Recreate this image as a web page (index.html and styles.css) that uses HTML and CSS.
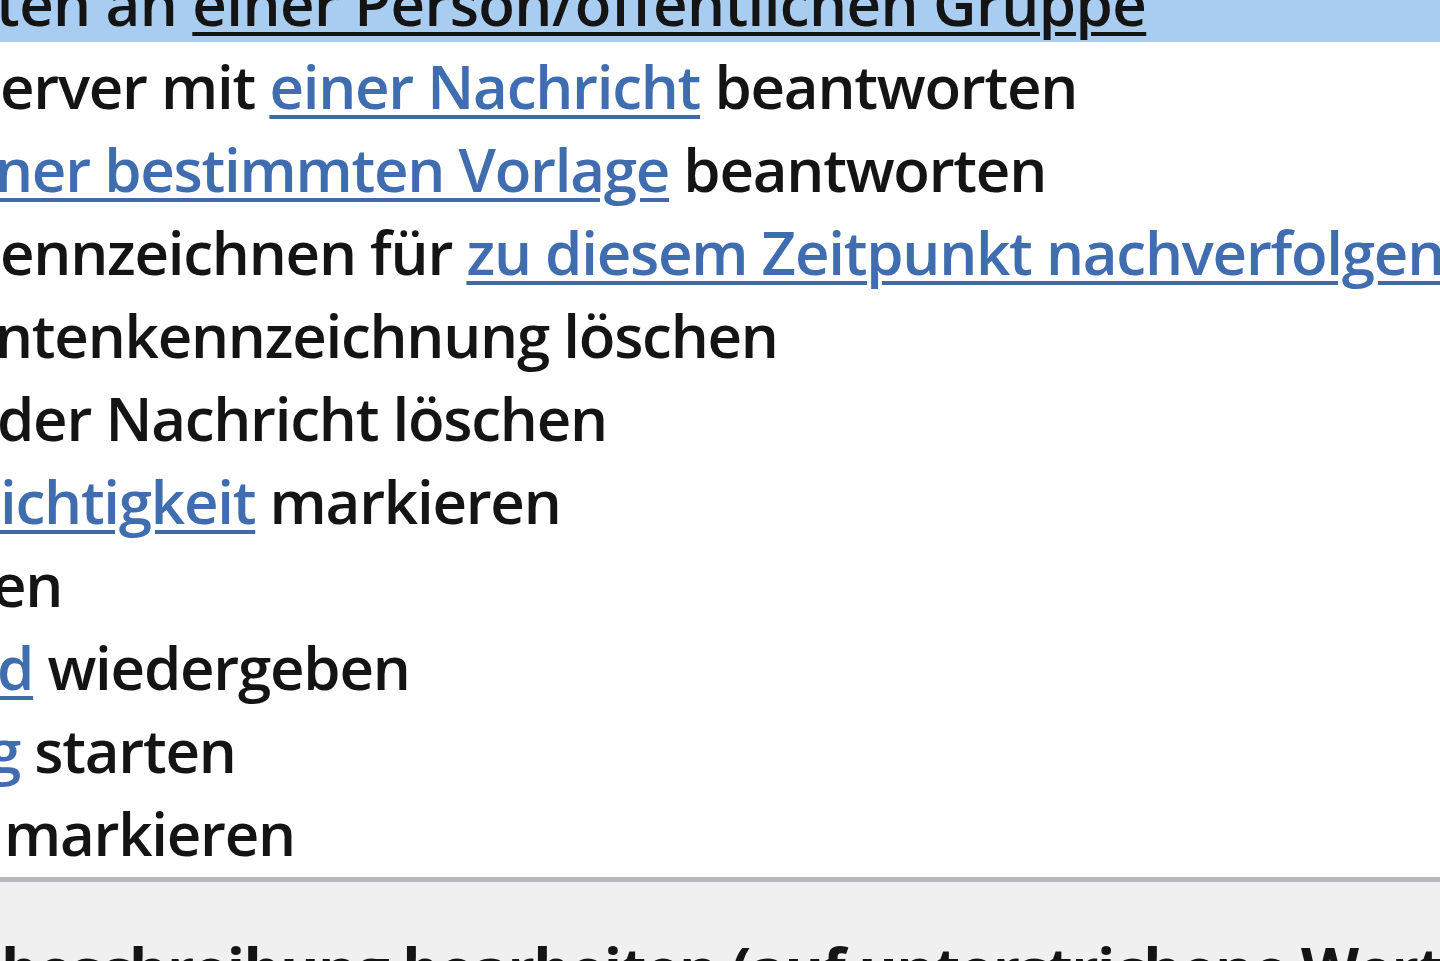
FILE: index.html
```html
<!DOCTYPE html>
<html lang="de">
<head>
<meta charset="utf-8">
<title>Regel-Assistent – Aktionen</title>
<link rel="stylesheet" href="styles.css">
</head>
<body>
<div class="dialog">
  <ul class="actions">
    <li class="row selected">ten an <span class="link">einer Person/öffentlichen Gruppe</span></li>
    <li class="row">erver mit <span class="link">einer Nachricht</span> beantworten</li>
    <li class="row cut-s"><span class="link">ner bestimmten Vorlage</span> beantworten</li>
    <li class="row">ennzeichnen für <span class="link">zu diesem Zeitpunkt nachverfolgen</span></li>
    <li class="row cut-s">ntenkennzeichnung löschen</li>
    <li class="row cut-xs">der Nachricht löschen</li>
    <li class="row"><span class="link">ichtigkeit</span> markieren</li>
    <li class="row cut-m">en</li>
    <li class="row cut-xs"><span class="link">d</span> wiedergeben</li>
    <li class="row cut-l"><span class="link">g</span> starten</li>
    <li class="row push">markieren</li>
  </ul>
  <div class="step">
    <p class="step-label">beschreibung bearbeiten (auf unterstrichene Werte klicken):</p>
  </div>
</div>
</body>
</html>
```

FILE: styles.css
```css
html, body {
  margin: 0;
  padding: 0;
  width: 1440px;
  height: 961px;
  overflow: hidden;
  background: #ffffff;
}

.dialog {
  font-family: "Open Sans", "Noto Sans", "DejaVu Sans", sans-serif;
  font-size: 60px;
  font-weight: 600;
  letter-spacing: -1.25px;
  color: #141414;
  display: flex;
  flex-direction: column;
  width: 1440px;
  height: 961px;
  overflow: hidden;
  filter: blur(0.6px);
}

.actions {
  list-style: none;
  margin: -41px 0 0 0;
  padding: 0 0 5px 0;
  background: #ffffff;
  display: flex;
  flex-direction: column;
}

.row {
  height: 83px;
  box-sizing: border-box;
  padding-top: 5px;
  line-height: 78px;
  white-space: nowrap;
}

.row.cut-xs { margin-left: -3px; }
.row.cut-s { margin-left: -5px; }
.row.cut-m { margin-left: -8px; }
.row.cut-l { margin-left: -12px; }
.row.push { margin-left: 4px; }

.row.selected {
  background: #a9cdf0;
  text-indent: -4px;
  letter-spacing: -0.6px;
}

.link {
  color: #3f6db0;
  text-decoration: underline;
  text-decoration-thickness: 4px;
  text-underline-offset: 6px;
  text-decoration-color: #406aa4;
}

.selected .link {
  color: #141414;
  text-decoration-color: #141414;
}

.step {
  background: #f0f0f0;
  border-top: 5px solid #b7b7be;
  flex: 1;
}

.step-label {
  margin: 0;
  padding-top: 46px;
  line-height: 83px;
  font-weight: 700;
  letter-spacing: -1.5px;
  white-space: nowrap;
  text-indent: 1px;
}
```
